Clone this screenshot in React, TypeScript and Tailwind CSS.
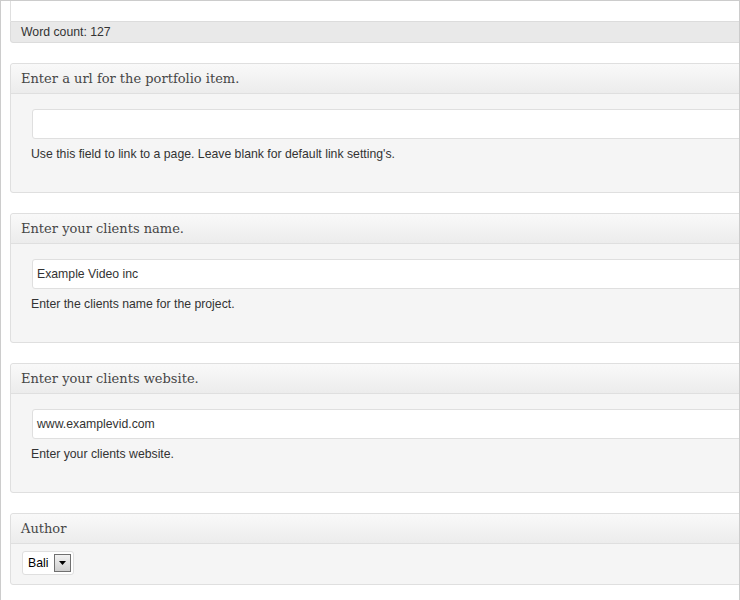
const sans = { fontFamily: '"Liberation Sans", Arial, sans-serif' }

function BoxHeader({ title }: { title: string }) {
  return (
    <div className="h-[30px] border-b border-[#dfdfdf] bg-gradient-to-b from-[#f9f9f9] to-[#ececec] pl-[10px] pt-[1px] flex items-center text-[13px] text-[#464646] font-['DejaVu_Serif',Georgia,serif] rounded-t-[3px]">
      {title}
    </div>
  )
}

function MetaBox({ title, value, help }: { title: string; value: string; help: string }) {
  return (
    <div className="w-[780px] border border-[#dfdfdf] rounded-[3px] bg-[#f5f5f5]">
      <BoxHeader title={title} />
      <div className="h-[98px] pl-[21px] pt-[15px]">
        <div className="h-[30px] border border-[#dfdfdf] rounded-[3px] bg-white flex items-center pl-[4px] text-[12.25px] text-[#333]" style={sans}>
          {value}
        </div>
        <div className="mt-[6px] -ml-[1px] leading-[18px] text-[12.25px] text-[#333]" style={sans}>
          {help}
        </div>
      </div>
    </div>
  )
}

export default function App() {
  return (
    <div className="w-[740px] h-[600px] overflow-hidden bg-white border-t border-l border-r border-[#cccccc]">
      <div className="pl-[9px]">
        <div className="w-[780px] h-[20px] border-l border-[#dfdfdf] bg-white" />
        <div className="w-[780px] h-[22px] border border-[#dcdcdc] rounded-b-[3px] bg-[#e9e9e9] flex items-center pl-[10px] pt-[1px] text-[12.25px] text-[#333]" style={sans}>
          Word count: 127
        </div>
        <div className="mt-[20px] flex flex-col gap-[20px]">
          <MetaBox
            title="Enter a url for the portfolio item."
            value=""
            help="Use this field to link to a page. Leave blank for default link setting's."
          />
          <MetaBox
            title="Enter your clients name."
            value="Example Video inc"
            help="Enter the clients name for the project."
          />
          <MetaBox
            title="Enter your clients website."
            value="www.examplevid.com"
            help="Enter your clients website."
          />
          <div className="w-[780px] border border-[#dfdfdf] rounded-[3px] bg-[#f5f5f5]">
            <BoxHeader title="Author" />
            <div className="h-[40px] pl-[11px] pt-[7px]">
              <div className="w-[52px] h-[24px] border border-[#dfdfdf] rounded-[3px] bg-white flex items-center pl-[5px] text-[12.25px] text-black" style={sans}>
                <span className="w-[26px]">Bali</span>
                <span className="w-[17px] h-[18px] border border-[#707070] bg-gradient-to-b from-[#f2f2f2] to-[#cfcfcf] flex items-center justify-center">
                  <svg width="7" height="4" viewBox="0 0 7 4">
                    <path d="M0 0h7L3.5 4z" fill="#000" />
                  </svg>
                </span>
              </div>
            </div>
          </div>
        </div>
      </div>
    </div>
  )
}
